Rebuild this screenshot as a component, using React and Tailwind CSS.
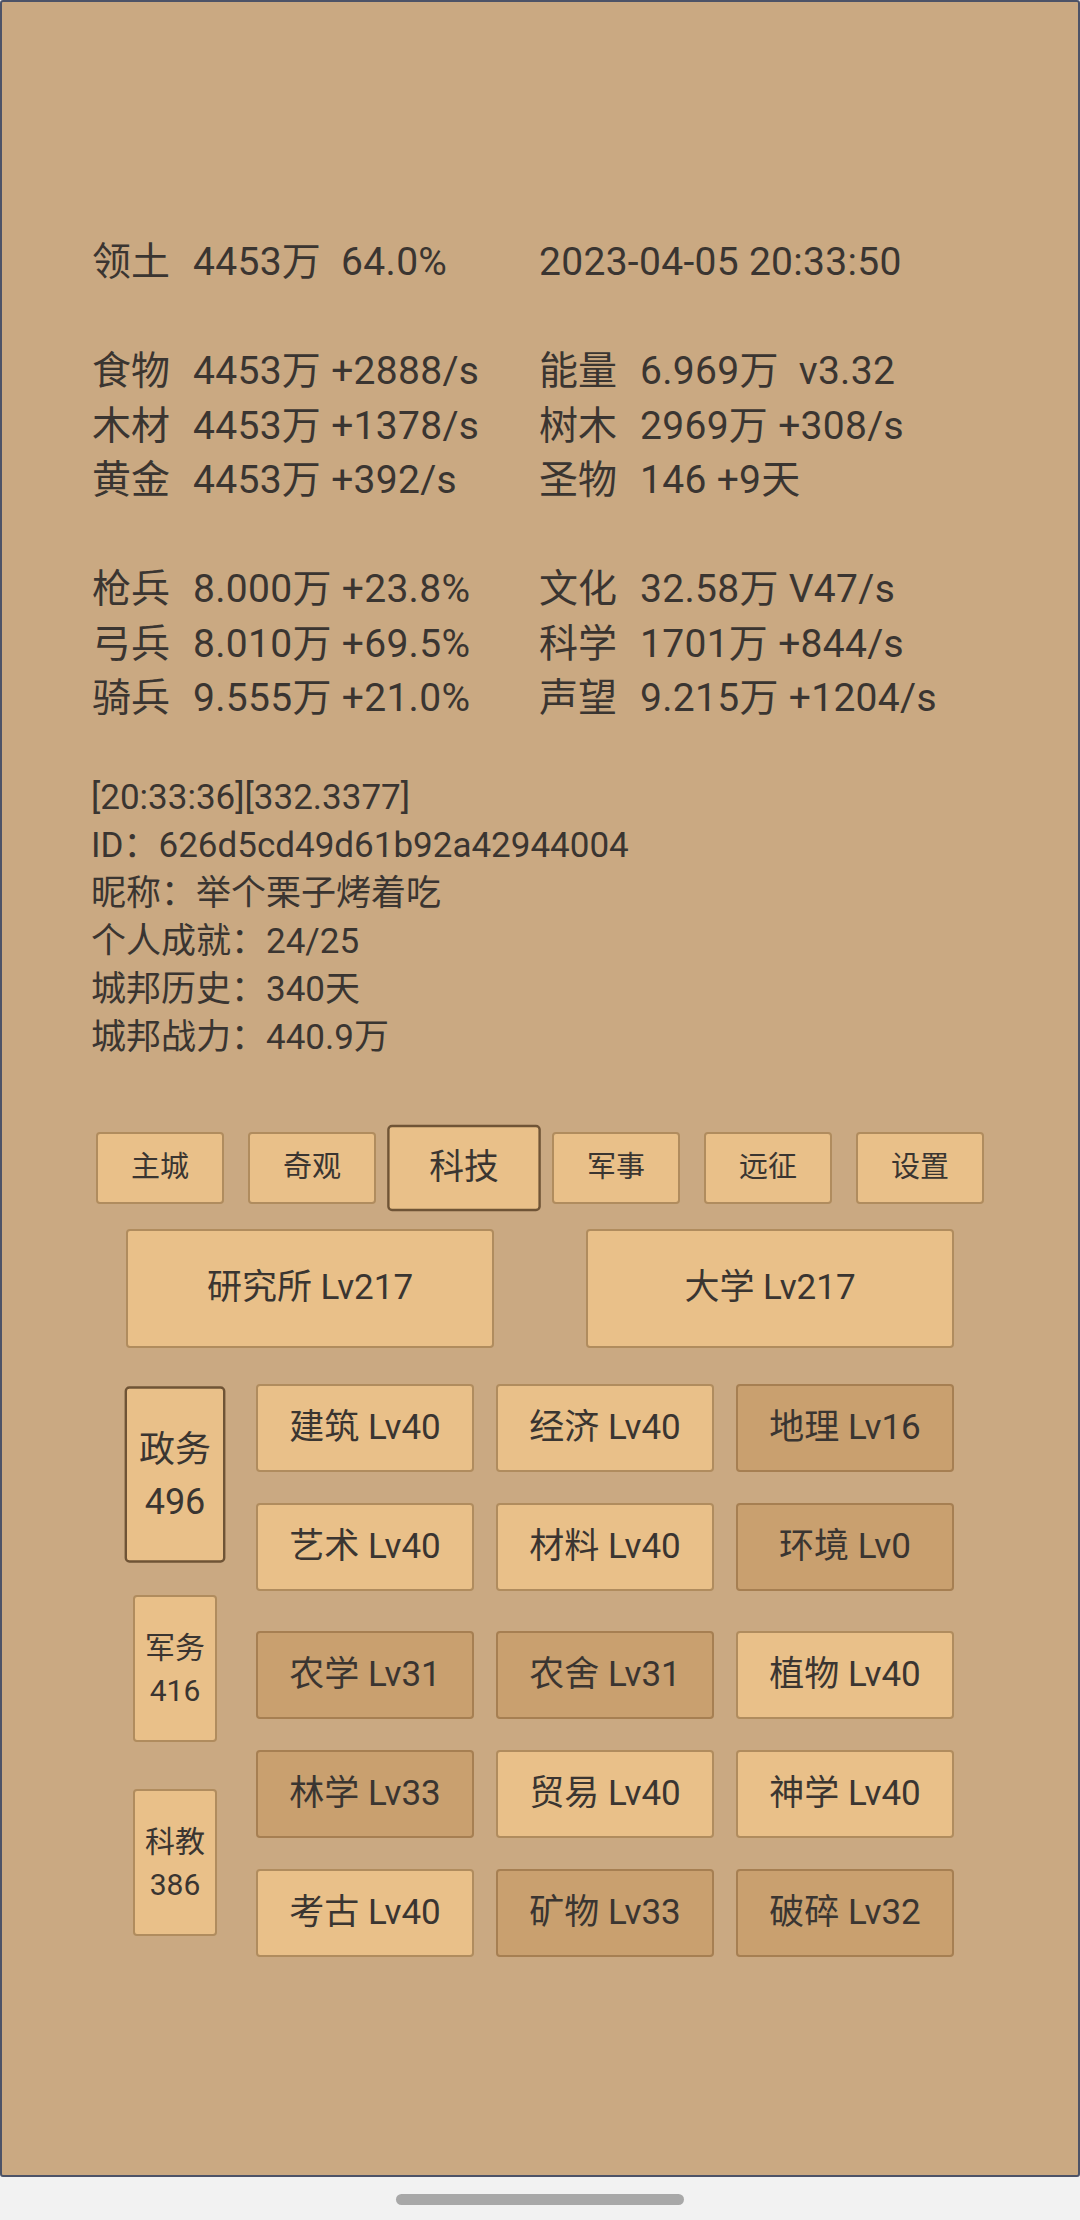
import React from "react";

const FONT = { fontFamily: 'Roboto, "Noto Sans CJK SC", sans-serif' };

const statGroups = [
  [[["领土", "4453万  64.0%"], ["", "2023-04-05 20:33:50"]]],
  [
    [["食物", "4453万 +2888/s"], ["能量", "6.969万  v3.32"]],
    [["木材", "4453万 +1378/s"], ["树木", "2969万 +308/s"]],
    [["黄金", "4453万 +392/s"], ["圣物", "146 +9天"]],
  ],
  [
    [["枪兵", "8.000万 +23.8%"], ["文化", "32.58万 V47/s"]],
    [["弓兵", "8.010万 +69.5%"], ["科学", "1701万 +844/s"]],
    [["骑兵", "9.555万 +21.0%"], ["声望", "9.215万 +1204/s"]],
  ],
];

const info = [
  "[20:33:36][332.3377]",
  "ID：626d5cd49d61b92a42944004",
  "昵称：举个栗子烤着吃",
  "个人成就：24/25",
  "城邦历史：340天",
  "城邦战力：440.9万",
];

const tabs = ["主城", "奇观", "科技", "军事", "远征", "设置"];

const techGroups = [
  [
    [["建筑 Lv40", 0], ["经济 Lv40", 0], ["地理 Lv16", 1]],
    [["艺术 Lv40", 0], ["材料 Lv40", 0], ["环境 Lv0", 1]],
  ],
  [
    [["农学 Lv31", 1], ["农舍 Lv31", 1], ["植物 Lv40", 0]],
    [["林学 Lv33", 1], ["贸易 Lv40", 0], ["神学 Lv40", 0]],
    [["考古 Lv40", 0], ["矿物 Lv33", 1], ["破碎 Lv32", 1]],
  ],
];

const sides = [
  ["政务", "496", true],
  ["军务", "416", false],
  ["科教", "386", false],
];

function Stat({ label, value }) {
  if (!label) return <div className="whitespace-pre tracking-[0.3px]">{value}</div>;
  return (
    <div className="flex whitespace-pre">
      <span className="w-[101px] shrink-0">{label}</span>
      <span className="tracking-[0.3px]">{value}</span>
    </div>
  );
}

export default function App() {
  return (
    <div className="w-[1080px] h-[2220px] bg-[#f2f2f2] flex flex-col text-[#3a3531]" style={FONT}>
      <div className="h-[2177px] shrink-0 bg-[#caa982] border-2 border-[#4d5367] rounded-[3px] flex flex-col">
        {/* resources */}
        <div className="pt-[233px] pl-[90px] text-[39px] leading-[54.5px] flex flex-col gap-[54.5px]">
          {statGroups.map((g, i) => (
            <div key={i} className="grid grid-cols-[447px_1fr]">
              {g.map((row, j) => (
                <React.Fragment key={j}>
                  <Stat label={row[0][0]} value={row[0][1]} />
                  <Stat label={row[1][0]} value={row[1][1]} />
                </React.Fragment>
              ))}
            </div>
          ))}
        </div>

        {/* player info */}
        <div className="mt-[48.5px] pl-[89px] text-[35px] leading-[48px]">
          {info.map((t) => (
            <div key={t}>{t}</div>
          ))}
        </div>

        {/* tabs */}
        <div className="mt-[70px] flex justify-center gap-[24px]">
          {tabs.map((t, i) => (
            <div
              key={t}
              className={
                "w-[128px] h-[72px] flex items-center justify-center rounded-[4px] bg-[#e9c089] text-[29px] border-2 " +
                (i === 2 ? "scale-120 border-[#6f5436]" : "border-[#b08c5e]")
              }
            >
              {t}
            </div>
          ))}
        </div>

        <div className="mt-[25px] flex justify-center gap-[92px]">
          {["研究所 Lv217", "大学 Lv217"].map((t) => (
            <div
              key={t}
              className="w-[368px] h-[119px] flex items-center justify-center rounded-[4px] bg-[#e9c089] border-2 border-[#b08c5e] text-[35px]"
            >
              {t}
            </div>
          ))}
        </div>

        {/* tech tree */}
        <div className="mt-[36px] pl-[131px] flex gap-[39px]">
          <div className="mt-[17px] flex flex-col gap-[47px]">
            {sides.map(([a, b, sel]) => (
              <div
                key={a}
                className={
                  "w-[84px] h-[147px] flex flex-col items-center justify-center rounded-[4px] bg-[#e9c089] border-2 text-[30px] leading-[43px] " +
                  (sel ? "scale-120 border-[#6f5436]" : "border-[#b08c5e]")
                }
              >
                <div>{a}</div>
                <div>{b}</div>
              </div>
            ))}
          </div>
          <div className="flex flex-col gap-[40px]">
            {techGroups.map((g, gi) => (
              <div key={gi} className="grid grid-cols-[218px_218px_218px] gap-x-[22px] gap-y-[31px]">
                {g.flat().map(([t, dark]) => (
                  <div
                    key={t}
                    className={
                      "h-[88px] flex items-center justify-center rounded-[4px] border-2 text-[35px] " +
                      (dark ? "bg-[#c9a06f] border-[#a67f52]" : "bg-[#e9c089] border-[#b08c5e]")
                    }
                  >
                    {t}
                  </div>
                ))}
              </div>
            ))}
          </div>
        </div>
      </div>
      <div className="flex-1 flex justify-center pt-[17px]">
        <div className="w-[288px] h-[11px] rounded-full bg-[#a8a8a8]" />
      </div>
    </div>
  );
}
